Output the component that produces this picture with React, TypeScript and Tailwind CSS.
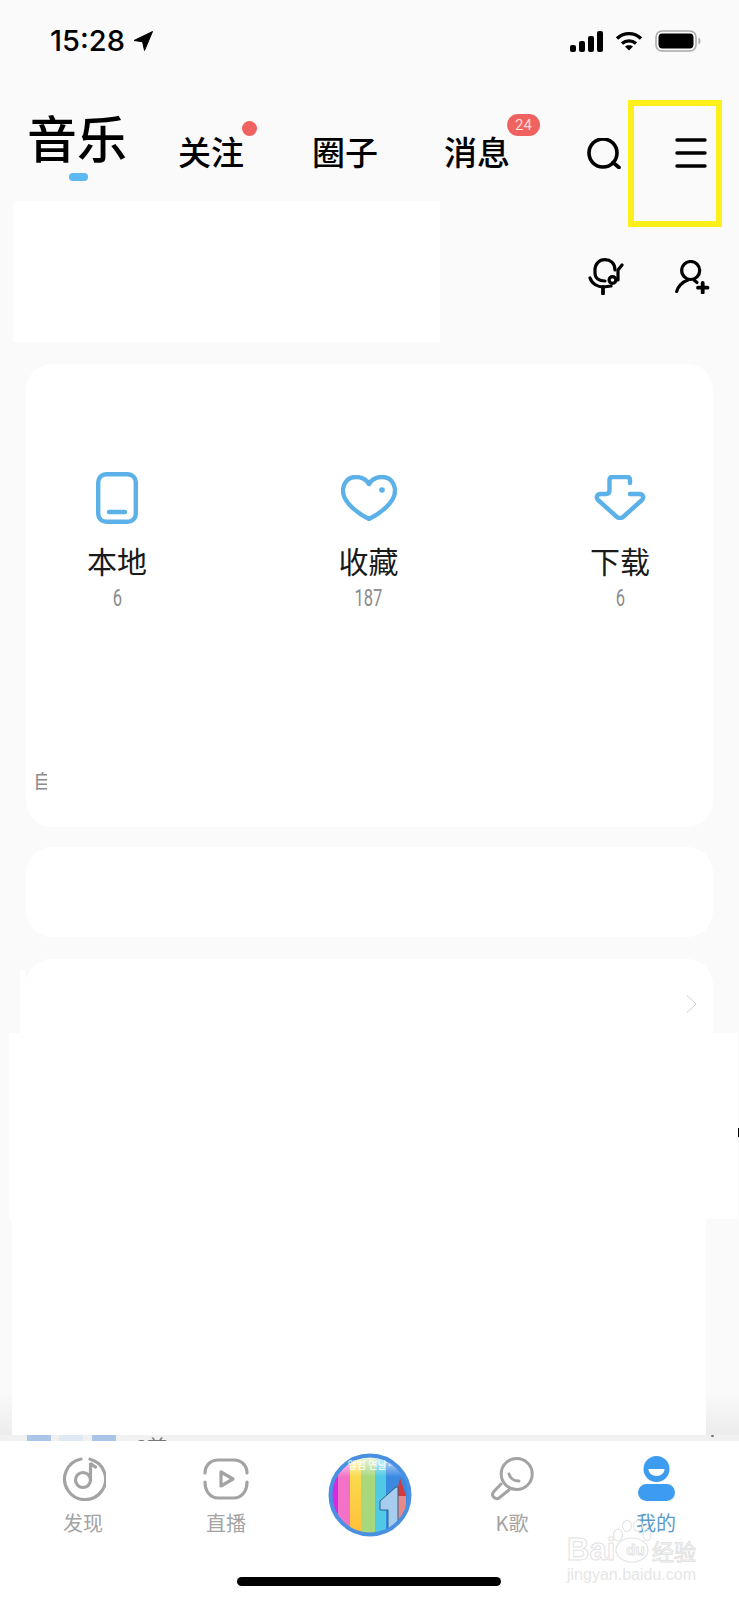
// Music app "my" tab, with the redacted white patches kept as in the picture

const CJK = "font-['Noto_Sans_CJK_SC','Noto_Sans',sans-serif]";

function StatusBar() {
  return (
    <div className="flex h-[100px] items-start justify-between pl-[50px] pr-[38px] pt-[30px]">
      <div className="flex items-center gap-[8px]">
        <span className="font-['Inter',sans-serif] text-[29px] leading-[22px] font-medium text-black">15:28</span>
        <svg width="20" height="20" viewBox="0 0 20 20">
          <path d="M19.5 .5 1 9.5l8.6 1.2L11.5 19.5z" fill="#000" stroke="#000" strokeWidth="1" strokeLinejoin="round" />
        </svg>
      </div>
      <div className="flex items-center gap-[12px]">
        <svg width="33" height="21" viewBox="0 0 33 21" fill="#000">
          <rect x="0" y="14" width="6" height="7" rx="2" />
          <rect x="9" y="10" width="6" height="11" rx="2" />
          <rect x="18" y="5" width="6" height="16" rx="2" />
          <rect x="27" y="0" width="6" height="21" rx="2" />
        </svg>
        <svg width="28" height="20" viewBox="0 0 28 20" fill="none" stroke="#000" strokeWidth="3.4">
          <path d="M2 7.5C9 1 19 1 26 7.5" />
          <path d="M7 12.5C11 9 17 9 21 12.5" />
          <path d="M14 19.5 10 15.5C12 13.8 16 13.8 18 15.5z" fill="#000" stroke="none" />
        </svg>
        <svg width="46" height="22" viewBox="0 0 46 22">
          <rect x="1" y="1" width="40" height="20" rx="6" fill="none" stroke="#a8a8a8" strokeWidth="1.5" />
          <rect x="3.5" y="3.5" width="35" height="15" rx="4" fill="#000" />
          <path d="M43.5 7.5c1.5.7 2 2 2 3.5s-.5 2.8-2 3.5z" fill="#a8a8a8" />
        </svg>
      </div>
    </div>
  );
}

function Tab({ label, className }: { label: string; className: string }) {
  return (
    <div className={`relative w-[64px] text-center text-[33px] leading-[44px] font-medium whitespace-nowrap text-black ${className}`}>
      {label}
    </div>
  );
}

function Header() {
  return (
    <div className="flex h-[101px] items-start pl-[29px]">
      <div className="relative mt-[8px] w-[97px]">
        <div className="ml-[-2px] text-[50px] leading-[57px] font-medium whitespace-nowrap text-black">音乐</div>
        <div className="mt-[8px] ml-[40px] h-[8px] w-[19px] rounded-full bg-[#5bb8f0]" />
      </div>
      <Tab label="关注" className="mt-[29px] ml-[52px]" />
      <div className="mt-[21px] h-[15px] w-[15px] rounded-full bg-[#f0625f]" />
      <Tab label="圈子" className="mt-[29px] ml-[55px]" />
      <Tab label="消息" className="mt-[29px] ml-[68px]" />
      <div className="mt-[14px] ml-[-1px] flex h-[22px] w-[33px] items-center justify-center rounded-full bg-[#f0625f] font-['Roboto',sans-serif] text-[15px] text-[#ffd9d6]">
        24
      </div>
      <svg className="mt-[38px] ml-[46px]" width="36" height="31" viewBox="0 0 36 31" fill="none" stroke="#000" strokeWidth="3.6" strokeLinecap="round">
        <circle cx="17" cy="15" r="14" />
        <path d="M27 24.5 33 29.5" />
      </svg>
      <svg className="mt-[38px] ml-[53px]" width="32" height="30" viewBox="0 0 32 30" fill="none" stroke="#000" strokeWidth="3.4" strokeLinecap="round">
        <path d="M2 2H30" />
        <path d="M2 15H30" />
        <path d="M2 28H30" />
      </svg>
    </div>
  );
}

function TopActions() {
  return (
    <div className="flex h-[141px]">
      <div className="ml-[13px] h-[141px] w-[427px] bg-white" />
      <svg className="mt-[57px] ml-[148px]" width="36" height="37" viewBox="0 0 36 37" fill="none" stroke="#000" strokeWidth="3.2" strokeLinecap="round" strokeLinejoin="round">
        <path d="M27 12C27 5 22 1.600 17 1.600 11 1.600 7 6 7 12V15C7 20 11 23 17 23" />
        <path d="M2 20C4 26 10 29 15 29L23 28" />
        <path d="M15 29V35.500" strokeWidth="3.800" />
        <circle cx="24.500" cy="22" r="3.400" />
        <path d="M30 22V12L34 7" />
      </svg>
      <svg className="mt-[59px] ml-[51px]" width="35" height="34" viewBox="0 0 35 34" fill="none" stroke="#000" strokeWidth="3.2" strokeLinecap="round">
        <circle cx="15.700" cy="10.500" r="9" />
        <path d="M13 20C7 22 2.500 27 1.700 31.500" />
        <path d="M19 20 22 22.500" />
        <path d="M27.700 23V32.500M23 27.700H32.500" strokeWidth="3.800" />
      </svg>
    </div>
  );
}

function Shortcut({ label, count, icon }: { label: string; count: string; icon: React.ReactNode }) {
  return (
    <div className="flex w-[60px] flex-col items-center">
      <div className="flex h-[55px] items-center justify-center">{icon}</div>
      <div className="mt-[19px] text-[30px] leading-[32px] whitespace-nowrap text-[#1a1a1a]">{label}</div>
      <div className="mt-[11px] scale-x-[.72] font-['Roboto',sans-serif] text-[23px] leading-[24px] text-[#8c8c8c]">{count}</div>
    </div>
  );
}

function Cards() {
  return (
    <>
      <div className="mt-[22px] ml-[26px] h-[463px] w-[687px] rounded-[26px] bg-white">
        <div className="flex justify-between pt-[106px] pr-[63px] pl-[61px]">
          <Shortcut
            label="本地"
            count="6"
            icon={
              <svg width="42" height="52" viewBox="0 0 42 52" fill="none" stroke="#5bb1e8" strokeWidth="4.400" strokeLinecap="round">
                <rect x="2.200" y="2.200" width="37.600" height="47.600" rx="8" />
                <path d="M13 40H29" />
              </svg>
            }
          />
          <Shortcut
            label="收藏"
            count="187"
            icon={
              <svg width="56" height="46" viewBox="0 0 56 46" fill="none" stroke="#5bb1e8" strokeWidth="4.400">
                <path d="M28 9C25 4 20 2 15 2 7 2 2 8 2 16 2 28 18 39 28 44 38 39 54 28 54 16 54 8 49 2 41 2 36 2 31 4 28 9z" strokeLinejoin="round" />
                <circle cx="41" cy="15" r="2.800" fill="#5bb1e8" stroke="none" />
              </svg>
            }
          />
          <Shortcut
            label="下载"
            count="6"
            icon={
              <svg width="52" height="45" viewBox="0 0 52 45" fill="none" stroke="#5bb1e8" strokeWidth="4.400" strokeLinecap="round" strokeLinejoin="round">
                <path d="M36 8V5C36 3 35 2 33 2H19C17 2 15.500 3 15.500 5V15C15.500 18 14 19 12 19H7C3 19 1.500 22 4 25L23 42C25 43.500 27 43.500 29 42L48 25C50.500 22 49 19 45 19H36" />
              </svg>
            }
          />
        </div>
        <div className="mt-[161px] ml-[7px] h-[18px] w-[14px] overflow-hidden text-[20px] leading-[18px] text-[#8c8c8c]">自</div>
      </div>
      <div className="mt-[20px] ml-[26px] h-[90px] w-[687px] rounded-[26px] bg-white" />
      <div className="mt-[22px] ml-[20px] flex h-[74px] w-[693px]">
        <div className="mt-[11px] h-[63px] w-[6px] bg-white" />
        <div className="flex h-[74px] w-[687px] items-start justify-end rounded-t-[26px] bg-white pt-[36px] pr-[16px]">
          <svg width="11" height="18" viewBox="0 0 11 18" fill="none" stroke="#cfcfcf" strokeWidth="1">
            <path d="M1 .5 10 9 1 17.500" />
          </svg>
        </div>
      </div>
      <div className="relative ml-[9px] h-[186px] w-[729px] bg-white">
        <div className="absolute top-[95px] right-[-1px] h-[9px] w-[1px] bg-black" />
      </div>
      <div className="h-[216px] bg-linear-to-b from-[#fafafa] from-[80%] to-[#ececec] pl-[12px]">
        <div className="h-[216px] w-[694px] bg-white" />
      </div>
      <div className="flex h-[6px] items-start overflow-hidden bg-[#f1f1f1] pl-[27px]">
        <div className="h-[6px] w-[24px] bg-[#a9c6e8]" />
        <div className="ml-[8px] h-[6px] w-[24px] bg-[#dfe8f4]" />
        <div className="ml-[9px] h-[6px] w-[24px] bg-[#a9c6e8]" />
        <div className="mt-[1px] ml-[20px] text-[20px] leading-[22px] whitespace-nowrap text-[#777]">3首</div>
        <div className="ml-[544px] h-[2px] w-[3px] rounded-full bg-[#777]" />
      </div>
    </>
  );
}

function NavItem({ label, icon, active, className }: { label: string; icon: React.ReactNode; active?: boolean; className: string }) {
  return (
    <div className={`flex w-[60px] flex-col items-center ${className}`}>
      <div className="flex h-[45px] items-center justify-center">{icon}</div>
      <div className={`mt-[10px] text-[20px] leading-[24px] whitespace-nowrap ${active ? 'text-[#5b9ccc]' : 'text-[#a3a3a3]'}`}>{label}</div>
    </div>
  );
}

function AlbumDisc() {
  return (
    <svg className="mt-[12px] ml-[72px]" width="84" height="84" viewBox="0 0 84 84">
      <defs>
        <clipPath id="discClip">
          <circle cx="42" cy="42" r="39" />
        </clipPath>
        <linearGradient id="discFade" x1="0" y1="0" x2="0" y2="1">
          <stop offset="0" stopColor="#fff" stopOpacity="0.95" />
          <stop offset="1" stopColor="#fff" stopOpacity="0" />
        </linearGradient>
        <linearGradient id="discYellow" x1="0" y1="0" x2="0" y2="1">
          <stop offset="0" stopColor="#f8e454" />
          <stop offset="1" stopColor="#ffbe38" />
        </linearGradient>
      </defs>
      <g clipPath="url(#discClip)">
        <rect x="0" y="0" width="10" height="84" fill="#d52ae0" />
        <rect x="10" y="0" width="12" height="84" fill="#f372c8" />
        <rect x="22" y="0" width="11" height="84" fill="url(#discYellow)" />
        <rect x="33" y="0" width="14" height="84" fill="#a9d87c" />
        <rect x="47" y="0" width="11" height="84" fill="#4fc9e6" />
        <rect x="58" y="0" width="26" height="84" fill="#3a8ae2" />
        <path d="M72 25 78 43H68z" fill="#d63a3a" />
        <path d="M70 43H78V72H70z" fill="#e88a8a" />
        <path d="M52 48 68 34H70V80L60 82V57H52z" fill="#a7cdee" stroke="#28608c" strokeWidth="1" />
        <rect x="0" y="0" width="84" height="24" fill="url(#discFade)" />
      </g>
      <circle cx="42" cy="42" r="39.500" fill="none" stroke="#4a90e2" strokeWidth="4" />
      <text x="42" y="16" textAnchor="middle" fontSize="10" fill="#fff" fontFamily="'Noto Sans CJK KR', sans-serif">앨범 연날·</text>
    </svg>
  );
}

function BottomNav() {
  return (
    <div className="relative flex h-[159px] items-start bg-white">
      <NavItem
        label="发现"
        className="mt-[15px] ml-[53px]"
        icon={
          <svg width="45" height="45" viewBox="0 0 45 45" fill="none" stroke="#a3a3a3" strokeWidth="3.2" strokeLinecap="round">
            <path d="M29 3.200a20.500 20.500 0 1 1-9-.2" />
            <circle cx="22" cy="24" r="7.500" />
            <path d="M29.500 24V7c1 2 3 3 5 4" />
          </svg>
        }
      />
      <NavItem
        label="直播"
        className="mt-[15px] ml-[83px]"
        icon={
          <svg width="46" height="42" viewBox="0 0 46 42" fill="none" stroke="#a3a3a3" strokeWidth="3.2" strokeLinecap="round" strokeLinejoin="round">
            <path d="M2 15C2 7 8 2 15 2H31C38 2 44 7 44 15" />
            <path d="M2 24C2 34 8 40 15 40H31C38 40 44 34 44 24" />
            <path d="M18 14V28L30 21z" />
          </svg>
        }
      />
      <AlbumDisc />
      <NavItem
        label="K歌"
        className="mt-[15px] ml-[70px]"
        icon={
          <svg width="43" height="44" viewBox="0 0 43 44" fill="none" stroke="#a3a3a3" strokeWidth="3" strokeLinecap="round">
            <circle cx="25.700" cy="17" r="15.500" />
            <path d="M18 17c1 4 5 7 10 7" />
            <path d="M10 27 2.500 35C1 37 1.500 39 3 40.500 5 42 6.500 42 8 41L18 33" />
          </svg>
        }
      />
      <NavItem
        label="我的"
        active
        className="mt-[15px] ml-[84px]"
        icon={
          <svg width="37" height="45" viewBox="0 0 37 45" fill="#3d9cf0">
            <circle cx="18.500" cy="13" r="13" />
            <path d="M10.500 13h16c0 4-3.500 7-8 7s-8-3-8-7z" fill="#fff" />
            <rect x="0" y="28" width="37" height="17" rx="8.500" />
          </svg>
        }
      />
      {/* site watermark */}
      <svg className="absolute top-[79px] left-[612px]" width="40" height="44" viewBox="0 0 40 44" fill="none" stroke="#e4e4e4" strokeWidth="1.200">
        <ellipse cx="6" cy="15" rx="4.500" ry="6" />
        <ellipse cx="15" cy="6" rx="4.500" ry="5.500" />
        <ellipse cx="26" cy="6" rx="4.500" ry="5.500" />
        <ellipse cx="35" cy="15" rx="4" ry="5.500" />
        <ellipse cx="20" cy="30" rx="16" ry="12" />
      </svg>
      <div className="absolute top-[91px] left-[567px] w-[132px]">
        <div className="flex h-[36px] items-center text-transparent [-webkit-text-stroke:1px_#e2e2e2]">
          <span className="w-[52px] font-['Liberation_Sans',sans-serif] text-[31px] font-bold">Bai</span>
          <span className="w-[33px] text-center font-['Liberation_Sans',sans-serif] text-[15px] font-bold">du</span>
          <span className="text-[22px] whitespace-nowrap">经验</span>
        </div>
        <div className="mt-[-2px] font-['Liberation_Sans',sans-serif] text-[16px] leading-[18px] whitespace-nowrap text-[#e6e6e6]">jingyan.baidu.com</div>
      </div>
      <div className="absolute top-[136px] left-[237px] h-[9px] w-[264px] rounded-full bg-black" />
    </div>
  );
}

export default function App() {
  return (
    <div className={`relative h-[1600px] w-[739px] overflow-hidden bg-[#fafafa] ${CJK}`}>
      <StatusBar />
      <Header />
      <TopActions />
      <Cards />
      <BottomNav />
      {/* highlight drawn on top of the screenshot */}
      <div className="absolute top-[100px] left-[628px] h-[127px] w-[94px] border-[6px] border-[#fdf01a]" />
    </div>
  );
}
